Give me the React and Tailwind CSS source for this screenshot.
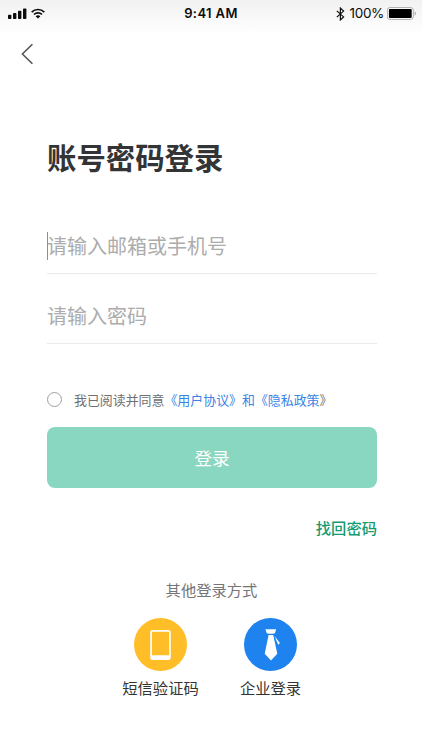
import React, { useState } from 'react';

const StatusBar = () => (
  <div className="relative flex h-[27px] items-center justify-between pl-2 pr-[5px] text-[#0c0c0c]">
    <div className="flex items-center gap-1">
      <svg className="h-3 w-[19px]" viewBox="0 0 19 12" fill="currentColor" aria-hidden="true">
        <rect x="0" y="6.8" width="3.4" height="4.2" rx="0.8" />
        <rect x="5" y="5" width="3.4" height="6" rx="0.8" />
        <rect x="10" y="2.7" width="3.4" height="8.3" rx="0.8" />
        <rect x="15" y="0.4" width="3.4" height="10.6" rx="0.8" />
      </svg>
      <svg className="mb-px h-[11px] w-[14px]" viewBox="0 0 14 11" fill="none" stroke="currentColor" strokeWidth="1.7" aria-hidden="true">
        <path d="M0.7 4.1C4.2 0.6 9.8 0.6 13.3 4.1" />
        <path d="M3 6.5C5.2 4.3 8.8 4.3 11 6.5" />
        <path d="M7 10.6L4.6 8.2C6 6.9 8 6.9 9.4 8.2Z" fill="currentColor" stroke="none" />
      </svg>
    </div>
    <span className="absolute left-0 w-full text-center text-[13px] font-semibold tracking-[0.4px]">9:41 AM</span>
    <div className="flex items-center">
      <svg className="mr-[5px] h-[14px] w-[9px]" viewBox="0 0 9 14" fill="none" stroke="currentColor" strokeWidth="1.2" aria-hidden="true">
        <path d="M0.8 3.9L7.6 9.9L4.4 12.9V1.1L7.6 4.1L0.8 10.1" />
      </svg>
      <span className="mr-[3px] text-[13.5px] tracking-[-0.35px]">100%</span>
      <svg className="h-[13px] w-[30px]" viewBox="0 0 30 13" aria-hidden="true">
        <rect x="0.3" y="0.6" width="26" height="11.8" rx="2.6" fill="#fff" stroke="#aaa" strokeWidth="1" />
        <rect x="1.9" y="2.1" width="22.8" height="8.8" rx="1" fill="#000" />
        <path d="M27.6 4.3Q29 5 29 6.5Q29 8 27.6 8.7Z" fill="#aaa" />
      </svg>
    </div>
  </div>
);

const Field = ({ text, focused }) => (
  <div className="relative flex h-[70px] items-center border-b border-[#ebebeb] pt-4 text-[20px] leading-7 text-[#acacac]">
    {focused && <span className="absolute left-0 top-[28px] h-7 w-px bg-[#8f8f8f]" />}
    <span>{text}</span>
  </div>
);

const PhoneIcon = () => (
  <svg className="h-[30px] w-[21px]" viewBox="0 0 21 30" aria-hidden="true">
    <path
      fillRule="evenodd"
      fill="#fff"
      d="M3 0H18Q20.8 0 20.8 2.8V27.2Q20.8 30 18 30H3Q0.2 30 0.2 27.2V2.8Q0.2 0 3 0ZM3 1.7Q1.9 1.7 1.9 2.8V25.2H19.1V2.8Q19.1 1.7 18 1.7Z"
    />
  </svg>
);

const TieIcon = () => (
  <svg className="h-[33px] w-5" viewBox="0 0 20 33" fill="#fff" aria-hidden="true">
    <path d="M4.4 1.2H15.2L13.9 5.2Q9.8 6.2 5.8 5.2Z" />
    <path d="M7.6 7H12.2L16.3 25.8L10 32.6L3.7 25.8Z" />
    <path d="M13.4 8L18.9 15L17.3 16.8Z" />
  </svg>
);

const LoginOption = ({ label, color, children }) => (
  <button className="flex w-[110px] flex-col items-center">
    <span className={`flex h-[53px] w-[53px] items-center justify-center rounded-full ${color}`}>{children}</span>
    <span className="mt-[6px] text-[15.3px] leading-6 text-[#333]">{label}</span>
  </button>
);

const App = () => {
  const [agreed, setAgreed] = useState(false);

  return (
    <div className="h-[750px] w-[422px] overflow-hidden bg-white bg-linear-to-b from-[#f1f1f1] to-white to-[34px] font-['Inter','Noto_Sans_CJK_SC',sans-serif]">
      <StatusBar />

      <header className="flex h-[53px] items-center pl-[21px]">
        <button aria-label="返回">
          <svg className="h-[22px] w-3" viewBox="0 0 12 22" fill="none" stroke="#555" strokeWidth="1.6" aria-hidden="true">
            <path d="M11.4 1.2L1.4 11L11.4 20.8" />
          </svg>
        </button>
      </header>

      <main className="pl-[47px] pr-[45px] pt-[59px]">
        <h1 className="text-[29.4px] font-bold leading-10 text-[#333436]">账号密码登录</h1>

        <div className="mt-[25px]">
          <Field text="请输入邮箱或手机号" focused />
          <Field text="请输入密码" />
        </div>

        <div className="mt-[45px] flex h-5 items-center">
          <button
            aria-label="同意协议"
            onClick={() => setAgreed(!agreed)}
            className={`mr-3 h-[15px] w-[15px] shrink-0 rounded-full border border-[#a0a0a0] ${agreed ? 'bg-[#89d7c0]' : ''}`}
          />
          <p className="whitespace-nowrap pt-[2px] text-[12.93px] leading-5 text-[#707070]">
            我已阅读并同意<span className="text-[#3b84e6]">《用户协议》和《隐私政策</span>》
          </p>
        </div>

        <button className="mt-[18px] block h-[60.5px] w-full rounded-lg bg-[#89d7c0] pt-[3px] text-[17.6px] text-white">登录</button>

        <div className="mt-[29.5px] flex justify-end">
          <button className="text-[15.3px] font-medium leading-6 text-[#149b72]">找回密码</button>
        </div>
      </main>

      <section className="mt-[38px] flex flex-col items-center">
        <h2 className="pl-px text-[15.3px] leading-6 text-[#757575]">其他登录方式</h2>
        <div className="mt-[15px] flex pl-[9px]">
          <LoginOption label="短信验证码" color="bg-[#ffbd27]">
            <PhoneIcon />
          </LoginOption>
          <LoginOption label="企业登录" color="bg-[#1e83ee]">
            <TieIcon />
          </LoginOption>
        </div>
      </section>
    </div>
  );
};

export default App;
